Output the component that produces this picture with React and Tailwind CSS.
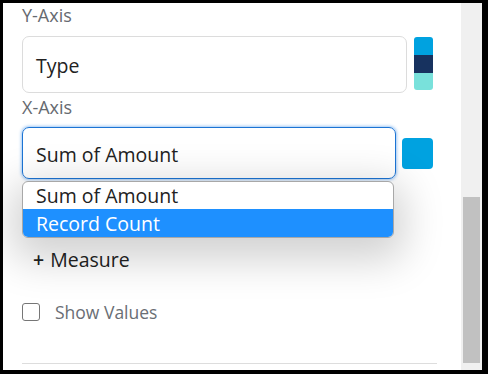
export default function App() {
  const font = { fontFamily: '"Open Sans", "Noto Sans", sans-serif' };
  return (
    <div className="w-[488px] h-[374px] bg-black pl-[3px] pt-[3px] pr-[6px] pb-[4px] flex" style={font}>
      <div className="flex-1 bg-white flex overflow-hidden">
        <div className="flex-1 pl-[19px] pr-[21px] flex flex-col">
          <div className="text-[18px] leading-[24px] text-[#666a70]">Y-Axis</div>
          <div className="mt-[9px] flex items-start">
            <div className="w-[385px] h-[57px] border border-[#dcdcdc] rounded-[7px] flex items-center pl-[13px] pt-[3px] text-[19.5px] text-[#222]">
              Type
            </div>
            <div className="ml-[7px] mt-[1px] w-[19px] flex flex-col rounded-[3px] overflow-hidden">
              <div className="h-[18px] bg-[#00a2e0]"></div>
              <div className="h-[18px] bg-[#17325f]"></div>
              <div className="h-[17px] bg-[#79e1db]"></div>
            </div>
          </div>
          <div className="mt-[2px] text-[18px] leading-[24px] text-[#666a70]">X-Axis</div>
          <div className="mt-[8px] flex items-center relative">
            <div className="w-[374px] h-[52px] border border-[#1c74d4] rounded-[7px] shadow-[0_0_3px_1px_rgba(40,130,230,0.45)] flex items-center pl-[13px] pt-[3px] text-[19.5px] text-[#222]">
              Sum of Amount
            </div>
            <div className="ml-[6px] w-[31px] h-[31px] rounded-[4px] bg-[#00a2e0]"></div>
            <div className="absolute left-0 top-[54px] w-[372px] border border-[#a8a8a8] rounded-[6px] bg-white overflow-hidden shadow-[0_12px_40px_10px_rgba(0,0,0,0.18)] z-10">
              <div className="h-[27px] pl-[13px] pt-[1px] flex items-center text-[19.5px] text-[#222]">Sum of Amount</div>
              <div className="h-[28px] pl-[13px] pt-[1px] flex items-center text-[19.5px] text-white bg-[#1e90ff]">Record Count</div>
            </div>
          </div>
          <div className="mt-[68px] pl-[11px] text-[19.5px] leading-[26px] text-[#222] flex items-center">
            <span className="font-semibold mr-[6px]">+</span>
            <span>Measure</span>
          </div>
          <div className="mt-[27px] flex items-center h-[24px]">
            <div className="w-[18px] h-[18px] border-[1.5px] border-[#767676] rounded-[3px]"></div>
            <span className="ml-[15px] pt-[1px] text-[17.5px] text-[#6a6e74]">Show Values</span>
          </div>
          <div className="mt-[39px] h-px bg-[#dddddd] w-[415px]"></div>
        </div>
        <div className="w-[21px] bg-[#f0f0f0] pt-[194px] px-[2px]">
          <div className="h-[166px] bg-[#c1c1c1]"></div>
        </div>
      </div>
    </div>
  );
}
